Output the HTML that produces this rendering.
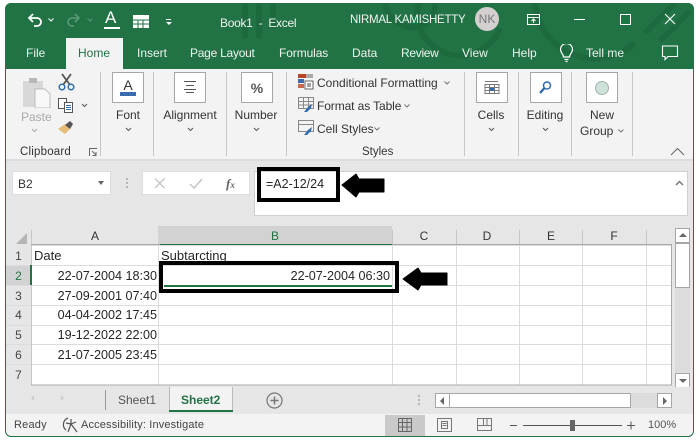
<!DOCTYPE html>
<html><head><meta charset="utf-8"><style>
html,body{margin:0;padding:0}
body{width:700px;height:446px;background:#fff;position:relative;overflow:hidden;font-family:"Liberation Sans",sans-serif;font-size:12px;color:#333}
#p{position:absolute;left:0;top:0;width:700px;height:446px;filter:blur(.3px);overflow:hidden}
div,span,svg{position:absolute}
.t{white-space:nowrap;line-height:14px}
.w{color:#fff;opacity:.92}
.g{background:#d4d4d4}
.box{background:#fff;border:1px solid #a6a6a6;width:30px;height:29px;top:72px}
.sep{position:absolute;top:72px;width:1px;height:84px;background:#c6c6c6}
.c{transform:translateX(-50%);text-align:center}
.d{color:#262626;font-size:12.6px;text-align:right;width:124px;left:33px;white-space:nowrap;line-height:14px}
.r{left:6px;width:25px;text-align:center;color:#444;line-height:14px}
.h{top:229px;transform:translateX(-50%);color:#333;line-height:14px}
</style></head><body><div id="p">
<!-- window -->
<div style="left:5px;top:3px;width:689px;height:434px;background:#e6e6e6;border:1px solid #217346;box-sizing:border-box;border-radius:6px"></div>
<div style="left:5px;top:3px;width:689px;height:66px;background:#217346;border-radius:6px 6px 0 0;overflow:hidden">
<svg style="left:230px;top:0" width="458" height="66" fill="none" stroke="#1d6a3f" stroke-width="6"><path d="M10 0v35M24 0v35M38 0v25M150 0c5 30 50 35 50 0M185 -5a40 40 0 0 0 80 30M300 0a60 60 0 0 0 100 40M410 30l30-30M425 38l30-30"/></svg></div>
<!-- QAT -->
<svg style="left:27px;top:12px" width="18" height="16" fill="none" stroke="#fff" stroke-width="1.8"><path d="M6 2L2 6l4 4M2 6h8a4 4 0 0 1 0 8H7"/></svg>
<svg style="left:48px;top:18px" width="6" height="4" fill="none" stroke="#fff"><path d="M.5.500l2.500 2.500L5.500.5"/></svg>
<svg style="left:66px;top:12px" width="15" height="16" fill="none" stroke="#5a9a76" stroke-width="1.6"><path d="M9 2l4 4-4 4M13 6H6a4 4 0 0 0 0 8h2"/></svg>
<svg style="left:87px;top:18px" width="6" height="4" fill="none" stroke="#5a9a76"><path d="M.5.500l2.500 2.500L5.500.5"/></svg>
<div class="t w" style="left:105px;top:11px;font-size:17px;opacity:1">A</div>
<div style="left:104px;top:27px;width:16px;height:2px;background:#fff"></div>
<svg style="left:133px;top:15px" width="16" height="13"><path d="M0 0h16v13H0z" fill="#fff"/><path d="M0 5h16M0 9h16M5 5v8M10 5v8" stroke="#217346"/></svg>
<div style="left:166px;top:19px;width:5px;height:1px;background:#fff"></div>
<div style="left:166px;top:22px;border:3px solid transparent;border-top:3px solid #fff;border-bottom:0"></div>
<div class="t w" style="left:220px;top:16px;font-size:12px;letter-spacing:-.3px">Book1&nbsp; -&nbsp; Excel</div>
<div class="t w" style="left:350px;top:13px;font-size:11.5px;letter-spacing:-.25px">NIRMAL KAMISHETTY</div>
<div style="left:475px;top:7px;width:24px;height:24px;border-radius:50%;background:#d4d0d0"></div>
<div class="t c" style="left:487px;top:12px;color:#777;font-size:12px">NK</div>
<svg style="left:526px;top:13px" width="15" height="13" fill="none" stroke="#fff"><path d="M1.500 1.500h12v10h-12zM1.500 4.500h12M7.500 10V6.500M5.500 8l2-2 2 2"/></svg>
<div style="left:574px;top:19px;width:11px;height:1px;background:#fff"></div>
<div style="left:620px;top:14px;width:9px;height:9px;border:1px solid #fff"></div>
<svg style="left:664px;top:13px" width="12" height="12" stroke="#fff" stroke-width="1.100"><path d="M1 1l10 10M11 1L1 11"/></svg>
<!-- tabs -->
<div style="left:66px;top:38px;width:57px;height:31px;background:#f3f3f3"></div>
<div class="t w" style="left:26px;top:46px">File</div>
<div class="t" style="left:78px;top:46px;color:#217346">Home</div>
<div class="t w" style="left:137px;top:46px">Insert</div>
<div class="t w" style="left:190px;top:46px;letter-spacing:-.25px">Page Layout</div>
<div class="t w" style="left:279px;top:46px;letter-spacing:-.1px">Formulas</div>
<div class="t w" style="left:352px;top:46px">Data</div>
<div class="t w" style="left:401px;top:46px;letter-spacing:-.3px">Review</div>
<div class="t w" style="left:462px;top:46px">View</div>
<div class="t w" style="left:512px;top:46px">Help</div>
<svg style="left:559px;top:44px" width="15" height="19" fill="none" stroke="#fff" stroke-width="1.200"><path d="M4.500 13c0-3-3-4-3-7.500a6 6 0 0 1 12 0c0 3.500-3 4.500-3 7.500zM5.500 15.500h4M6.500 17.500h2"/></svg>
<div class="t w" style="left:586px;top:46px">Tell me</div>
<svg style="left:661px;top:45px" width="18" height="16" fill="none" stroke="#fff" stroke-width="1.100"><path d="M1.500 1h15v10.500H7L4 14.500v-3H1.500z"/></svg>
<!-- ribbon -->
<div style="left:6px;top:69px;width:687px;height:90px;background:#f3f3f3"></div>
<div style="left:6px;top:159px;width:687px;height:2px;background:#dcdcdc"></div>
<div class="sep" style="left:100px"></div><div class="sep" style="left:153px"></div><div class="sep" style="left:226px"></div><div class="sep" style="left:286px"></div><div class="sep" style="left:464px"></div><div class="sep" style="left:518px"></div><div class="sep" style="left:571px"></div><div class="sep" style="left:632px"></div>
<!-- clipboard -->
<svg style="left:22px;top:76px" width="30" height="32"><path d="M1 5h20v26H1z" fill="#d8d8d8"/><path d="M7 2h8v5H7z" fill="#b8b8b8"/><path d="M13 13h10l5 5v14H13z" fill="#f8f8f8" stroke="#bdbdbd"/></svg>
<div class="t" style="left:21px;top:110px;color:#a8a8a8;font-size:12px">Paste</div>
<svg style="left:31px;top:128px" width="7" height="5" fill="none" stroke="#aaa"><path d="M1 1l2.500 2.500L6 1"/></svg>
<svg style="left:58px;top:73px" width="17" height="18" fill="none"><path d="M4 1l8 11M13 1L5 12" stroke="#555" stroke-width="1.800"/><circle cx="4" cy="14" r="2.800" stroke="#2f6cae" stroke-width="1.500"/><circle cx="13" cy="14" r="2.800" stroke="#2f6cae" stroke-width="1.500"/></svg>
<svg style="left:58px;top:98px" width="17" height="15" fill="#fff" stroke="#555"><path d="M.5.500h8v10h-8z"/><path d="M6.500 4.500h8v10h-8z"/><path d="M8 7.500h5M8 9.500h5M8 11.500h5" stroke="#2f6cae"/></svg>
<svg style="left:81px;top:103px" width="7" height="5" fill="none" stroke="#555"><path d="M1 1l2.500 2.500L6 1"/></svg>
<svg style="left:58px;top:120px" width="17" height="15"><path d="M0 9l7-5 5 5-5 5z" fill="#e6bd78"/><path d="M7 5l5-4 3 3-3 5z" fill="#555"/></svg>
<div class="t" style="left:20px;top:145px;font-size:11.500px;letter-spacing:.2px">Clipboard</div>
<svg style="left:89px;top:148px" width="9" height="9" fill="none" stroke="#666"><path d="M.5 8V.5H8M3 3l4 4M7 4v3.500H3.500"/></svg>
<!-- groups -->
<div class="box" style="left:112px"></div>
<div class="t c" style="left:128px;top:78px;font-size:14px;color:#333">A</div>
<div style="left:120px;top:92px;width:16px;height:4px;background:#3d6cae"></div>
<div class="t c" style="left:128px;top:108px">Font</div>
<svg style="left:125px;top:127px" width="7" height="5" fill="none" stroke="#555"><path d="M1 1l2.500 2.500L6 1"/></svg>
<div class="box" style="left:174px"></div>
<svg style="left:182px;top:80px" width="16" height="14" stroke="#555"><path d="M2 1.500h12M4 5.500h8M2 9.500h12M4 12.500h8"/></svg>
<div class="t c" style="left:190px;top:108px">Alignment</div>
<svg style="left:187px;top:127px" width="7" height="5" fill="none" stroke="#555"><path d="M1 1l2.500 2.500L6 1"/></svg>
<div class="box" style="left:241px"></div>
<div class="t c" style="left:257px;top:81px;font-size:14px;font-weight:bold;color:#555">%</div>
<div class="t c" style="left:256px;top:108px">Number</div>
<svg style="left:253px;top:127px" width="7" height="5" fill="none" stroke="#555"><path d="M1 1l2.500 2.500L6 1"/></svg>
<!-- styles -->
<svg style="left:298px;top:74px" width="16" height="16"><path d="M0 0h8v4H0z" fill="#b7472a"/><path d="M8 0h7v4H8z" fill="#aaa"/><path d="M0 5h6v4H0z" fill="#3d6cae"/><path d="M0 10h6v4H0z" fill="#c8694a"/><path d="M7 7h8v8H7z" fill="#fff" stroke="#666"/><path d="M9 10h4M9 12h4" stroke="#444"/></svg>
<div class="t" style="left:317px;top:76px">Conditional Formatting</div>
<svg style="left:444px;top:81px" width="6" height="4" fill="none" stroke="#777"><path d="M.5.500l2.500 2.500L5.500.5"/></svg>
<svg style="left:298px;top:97px" width="16" height="16" fill="none" stroke="#888"><path d="M.5.500h15v11H.5zM.5 4.500h15M.5 8h15M5.500.5v11M10.500.5v11"/><path d="M6 15l4-5 4-3-1 4-4 4z" fill="#2f6cae" stroke="none"/></svg>
<div class="t" style="left:317px;top:99px;letter-spacing:-.1px">Format as Table</div>
<svg style="left:404px;top:104px" width="6" height="4" fill="none" stroke="#777"><path d="M.5.500l2.500 2.500L5.500.5"/></svg>
<svg style="left:298px;top:120px" width="16" height="16" fill="none" stroke="#888"><path d="M.5.500h15v11H.5zM.5 4.500h15"/><path d="M6 15l4-5 4-3-1 4-4 4z" fill="#2f6cae" stroke="none"/></svg>
<div class="t" style="left:317px;top:122px">Cell Styles</div>
<svg style="left:374px;top:127px" width="6" height="4" fill="none" stroke="#777"><path d="M.5.500l2.500 2.500L5.500.5"/></svg>
<div class="t" style="left:362px;top:145px;font-size:11.500px">Styles</div>
<div class="box" style="left:476px"></div>
<svg style="left:484px;top:80px" width="16" height="16" stroke="#777" fill="none"><path d="M1 1.500h13M1 4.500h14v9H1zM1 7.500h14M1 10.500h14M5.500 4.500v9M10.500 4.500v9"/><path d="M6 8h4v3H6z" fill="#2f6cae" stroke="none"/></svg>
<div class="t c" style="left:491px;top:108px">Cells</div>
<svg style="left:488px;top:127px" width="7" height="5" fill="none" stroke="#555"><path d="M1 1l2.500 2.500L6 1"/></svg>
<div class="box" style="left:530px"></div>
<svg style="left:538px;top:80px" width="15" height="15" fill="none" stroke="#2f6cae"><circle cx="9" cy="5.500" r="3.500" stroke-width="1.500"/><path d="M6.500 8L2 13" stroke-width="2.400"/></svg>
<div class="t c" style="left:545px;top:108px">Editing</div>
<svg style="left:542px;top:127px" width="7" height="5" fill="none" stroke="#555"><path d="M1 1l2.500 2.500L6 1"/></svg>
<div class="box" style="left:586px"></div>
<div style="left:595px;top:81px;width:12px;height:12px;border-radius:50%;background:#cfe2da;border:1px solid #9cb5ab"></div>
<div class="t c" style="left:602px;top:108px">New</div>
<div class="t" style="left:580px;top:124px">Group</div>
<svg style="left:618px;top:129px" width="6" height="4" fill="none" stroke="#777"><path d="M.5.500l2.500 2.500L5.500.5"/></svg>
<svg style="left:670px;top:147px" width="15" height="9" fill="none" stroke="#666"><path d="M1 8l6.500-6.500L14 8"/></svg>
<!-- formula bar -->
<div style="left:12px;top:171px;width:99px;height:24px;background:#fff;border:1px solid #ddd;box-sizing:border-box"></div>
<div class="t" style="left:18px;top:177px">B2</div>
<div style="left:98px;top:181px;border:3.500px solid transparent;border-top:4px solid #666;border-bottom:0"></div>
<div style="left:126px;top:178px;width:2px;height:2px;background:#b5b5b5;box-shadow:0 4px #b5b5b5,0 8px #b5b5b5"></div>
<div style="left:142px;top:171px;width:108px;height:24px;background:#fff;border:1px solid #ddd;box-sizing:border-box"></div>
<svg style="left:154px;top:178px" width="12" height="11" stroke="#c4c4c4" stroke-width="1.300"><path d="M1 .5l9.500 9.500M10.500.5L1 10"/></svg>
<svg style="left:189px;top:178px" width="14" height="12" fill="none" stroke="#c4c4c4" stroke-width="1.500"><path d="M1 6l4 4 8-9"/></svg>
<div class="t" style="left:226px;top:177px;font-family:'Liberation Serif',serif;font-style:italic;font-weight:bold;font-size:13px;color:#666">f<span style="position:static;font-size:9px">x</span></div>
<div style="left:254px;top:171px;width:434px;height:45px;background:#fff;border:1px solid #d0d0d0;box-sizing:border-box"></div>
<svg style="left:675px;top:180px" width="9" height="6" fill="none" stroke="#777" stroke-width="1.500"><path d="M1 5l3.500-3.500L8 5"/></svg>
<div class="t" style="left:266px;top:177px;color:#262626;font-size:12.5px">=A2-12/24</div>
<div style="left:257px;top:167px;width:83px;height:35px;border:4.500px solid #000;box-sizing:border-box"></div>
<svg style="left:341px;top:173px" width="45" height="25"><path d="M1 12L15 1l3 5h25v13H18l-3 5z" fill="#000" stroke="#000" stroke-linejoin="round"/></svg>
<!-- grid -->
<div style="left:6px;top:225px;width:665px;height:20px;background:#e6e6e6"></div>
<div style="left:6px;top:245px;width:25px;height:140px;background:#e6e6e6"></div>
<div style="left:31px;top:245px;width:640px;height:140px;background:#fff"></div>
<div style="left:158px;top:226px;width:234px;height:19px;background:#d2d2d2"></div>
<div style="left:158px;top:244px;width:234px;height:1px;background:#217346"></div>
<svg style="left:16px;top:233px" width="12" height="11"><path d="M11 0v11H0z" fill="#b5b5b5"/></svg>
<svg style="left:6px;top:225px" width="666" height="161" fill="none">
<g stroke="#dcdcdc"><path d="M25 20.500h640M25 40.500h640M25 60.500h640M25 80.500h640M25 100.500h640M25 119.500h640M25 139.500h640"/><path d="M152.500 20v140M386.500 20v140M450.500 20v140M513.500 20v140M576.500 20v140M640.500 20v140"/><path d="M0 40.500h25M0 60.500h25M0 80.500h25M0 100.500h25M0 119.500h25M0 139.500h25"/></g>
<g stroke="#c6c6c6"><path d="M25.500 5v155M386.500 5v15M450.500 5v15M513.500 5v15M576.500 5v15M640.500 5v15"/></g>
<path d="M25 19.500h129M386 19.500h279.500v140.500H25" stroke="#a9a9a9"/>
</svg>
<div style="left:6px;top:266px;width:25px;height:19px;background:#d2d2d2"></div>
<div style="left:30px;top:265px;width:2px;height:20px;background:#217346"></div>
<div class="h" style="left:95px">A</div>
<div class="h" style="left:275px;color:#217346">B</div>
<div class="h" style="left:424px">C</div>
<div class="h" style="left:487px">D</div>
<div class="h" style="left:551px">E</div>
<div class="h" style="left:614px">F</div>
<div class="r" style="top:249px">1</div><div class="r" style="top:269px;color:#217346">2</div><div class="r" style="top:289px">3</div><div class="r" style="top:308px">4</div><div class="r" style="top:328px">5</div><div class="r" style="top:348px">6</div><div class="r" style="top:368px">7</div>
<div class="t" style="left:34px;top:249px;color:#262626;font-size:13px">Date</div>
<div class="t" style="left:161px;top:249px;color:#262626;font-size:13px">Subtarcting</div>
<div class="d" style="top:269px">22-07-2004 18:30</div>
<div class="d" style="top:289px">27-09-2001 07:40</div>
<div class="d" style="top:308px">04-04-2002 17:45</div>
<div class="d" style="top:328px">19-12-2022 22:00</div>
<div class="d" style="top:348px">21-07-2005 23:45</div>
<div class="t" style="left:240px;top:269px;width:150px;text-align:right;color:#262626;font-size:12.6px">22-07-2004 06:30</div>
<div style="left:164px;top:285px;width:228px;height:2px;background:#217346"></div>
<div style="left:159px;top:261px;width:240px;height:32px;border:4.500px solid #000;box-sizing:border-box"></div>
<svg style="left:402px;top:267px" width="46" height="24"><path d="M1 12L16 1l3 5h26v12H19l-3 5z" fill="#000" stroke="#000" stroke-linejoin="round"/></svg>
<!-- v scrollbar -->
<div style="left:675px;top:228px;width:15px;height:159px;background:#dcdcdc"></div>
<div style="left:675px;top:228px;width:15px;height:15px;background:#fff;border:1px solid #a6a6a6;box-sizing:border-box"></div>
<div style="left:679px;top:233px;border:4px solid transparent;border-bottom:4px solid #666;border-top:0"></div>
<div style="left:675px;top:243px;width:15px;height:45px;background:#fff;border:1px solid #a6a6a6;box-sizing:border-box"></div>
<div style="left:675px;top:373px;width:15px;height:15px;background:#fff;border:1px solid #a6a6a6;box-sizing:border-box"></div>
<div style="left:679px;top:379px;border:4px solid transparent;border-top:4px solid #666;border-bottom:0"></div>
<!-- sheet tabs -->
<div style="left:6px;top:387px;width:687px;height:27px;background:#e6e6e6"></div>
<div style="left:31px;top:395px;border:3px solid transparent;border-right:3px solid #ccc;border-left:0"></div>
<div style="left:61px;top:395px;border:3px solid transparent;border-left:3px solid #ccc;border-right:0"></div>
<div style="left:105px;top:390px;width:1px;height:20px;background:#999"></div>
<div class="t" style="left:118px;top:393px;color:#555">Sheet1</div>
<div style="left:169px;top:387px;width:64px;height:24px;background:#f3f3f3;border-left:1px solid #bbb;border-right:1px solid #bbb;box-sizing:border-box"></div>
<div style="left:169px;top:410px;width:64px;height:2px;background:#217346"></div>
<div class="t" style="left:181px;top:393px;color:#217346;font-weight:bold">Sheet2</div>
<svg style="left:266px;top:392px" width="17" height="17" fill="none" stroke="#777" stroke-width="1.200"><circle cx="8.500" cy="8.500" r="7.500"/><path d="M4.500 8.500h8M8.500 4.500v8" stroke-width="1.500"/></svg>
<div style="left:418px;top:395px;width:2px;height:2px;background:#b5b5b5;box-shadow:0 4px #b5b5b5,0 8px #b5b5b5"></div>
<div style="left:435px;top:393px;width:237px;height:15px;background:#dcdcdc"></div>
<div style="left:435px;top:393px;width:15px;height:15px;background:#fff;border:1px solid #a6a6a6;box-sizing:border-box"></div>
<div style="left:440px;top:397px;border:4px solid transparent;border-right:4px solid #666;border-left:0"></div>
<div style="left:449px;top:393px;width:182px;height:15px;background:#fff;border:1px solid #a6a6a6;box-sizing:border-box"></div>
<div style="left:657px;top:393px;width:15px;height:15px;background:#fff;border:1px solid #a6a6a6;box-sizing:border-box"></div>
<div style="left:663px;top:397px;border:4px solid transparent;border-left:4px solid #666;border-right:0"></div>
<!-- status -->
<div style="left:6px;top:414px;width:687px;height:22px;background:#f3f3f3;border-radius:0 0 6px 6px"></div>
<div class="t" style="left:14px;top:418px;font-size:11px;letter-spacing:.2px;color:#444">Ready</div>
<svg style="left:62px;top:417px" width="17" height="17" fill="none" stroke="#555" stroke-width="1.200"><path d="M6 1a7 7 0 0 0-2 12M9 2v5M4 6l5 1 5-2M9 7l-3 8M9 7l6 8"/></svg>
<div class="t" style="left:81px;top:418px;font-size:11px;letter-spacing:.15px;color:#444">Accessibility: Investigate</div>
<div style="left:385px;top:415px;width:40px;height:21px;background:#c9c9c9"></div>
<svg style="left:398px;top:418px" width="14" height="14" fill="none" stroke="#666"><path d="M.5.500h13v13H.5zM.5 4.500h13M.5 9h13M4.500.5v13M9 .5v13"/></svg>
<svg style="left:437px;top:418px" width="15" height="14" fill="none" stroke="#777"><path d="M.5.500h14v13H.5zM4.500 3.500h6v7h-6zM5.500 5.500h4M5.500 7.500h4"/></svg>
<svg style="left:477px;top:418px" width="15" height="14" fill="none" stroke="#777"><path d="M.5.500h14v12H.5zM6.500.5v7h8M.5 7.500h6M10 .5v7"/></svg>
<div style="left:510px;top:425px;width:7px;height:1px;background:#555"></div>
<div style="left:523px;top:425px;width:99px;height:1px;background:#555"></div>
<div style="left:570px;top:420px;width:5px;height:11px;background:#666"></div>
<svg style="left:626px;top:420px" width="11" height="11" stroke="#555"><path d="M1 5.500h8M5 1.500v8"/></svg>
<div class="t" style="left:648px;top:418px;font-size:11px;color:#555">100%</div>
</div></body></html>
